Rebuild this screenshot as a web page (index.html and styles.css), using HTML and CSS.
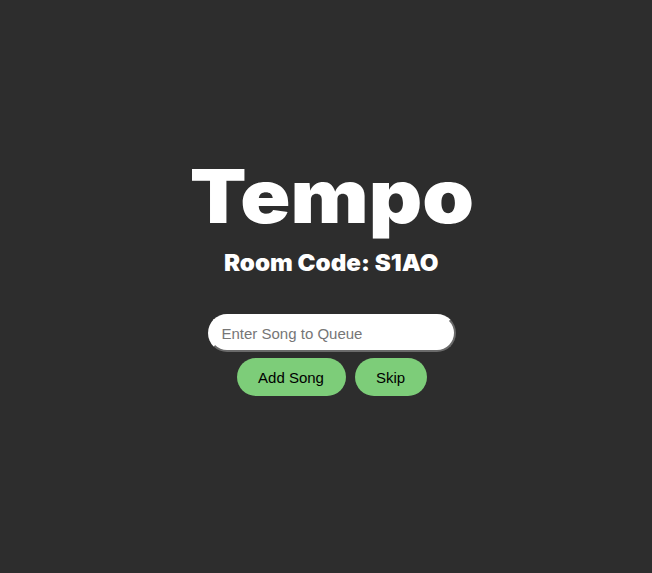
FILE: index.html
```html
<!DOCTYPE html>
<html>
<head>
<meta charset="utf-8">
<link rel="stylesheet" href="styles.css">
</head>
<body>
<main class="app">
  <h1 class="title">Tempo</h1>
  <h2 class="room">Room Code: S1AO</h2>
  <input class="song-input" type="text" placeholder="Enter Song to Queue">
  <div class="actions">
    <button class="btn btn-add">Add Song</button>
    <button class="btn btn-skip">Skip</button>
  </div>
</main>
</body>
</html>
```
FILE: styles.css
```css
html, body {
  margin: 0;
  padding: 0;
  background: #2d2d2d;
  height: 100%;
}
.app {
  display: flex;
  flex-direction: column;
  align-items: center;
  padding-top: 150px;
  padding-left: 11px;
  font-family: "Liberation Sans", Arial, sans-serif;
}
.title {
  margin: 0;
  color: #ffffff;
  font-family: Inter, "DejaVu Sans", sans-serif;
  font-weight: 900;
  font-size: 74px;
  line-height: 92px;
  letter-spacing: 0;
  transform: scaleX(1.12);
}
.room {
  margin: 6px 0 0 0;
  color: #ffffff;
  font-family: Inter, "DejaVu Sans", sans-serif;
  font-weight: 900;
  font-size: 23px;
  line-height: 30px;
  transform: scaleX(1.05);
}
.song-input {
  margin-top: 36px;
  width: 248px;
  height: 38px;
  box-sizing: border-box;
  border-radius: 19px;
  border: 2px solid #ffffff;
  border-right-color: #6a6a6a;
  border-bottom-color: #6a6a6a;
  background: #ffffff;
  padding: 0 12px;
  font-family: "Liberation Sans", Arial, sans-serif;
  font-size: 15px;
  color: #222;
  outline: none;
}
.song-input::placeholder {
  color: #767676;
}
.actions {
  display: flex;
  gap: 9px;
  margin-top: 6px;
}
.btn {
  height: 38px;
  border: none;
  border-radius: 19px;
  background: #7dcd79;
  color: #000;
  font-family: "Liberation Sans", Arial, sans-serif;
  font-size: 15px;
  padding: 0;
}
.btn-add { width: 109px; }
.btn-skip { width: 72px; }
```
